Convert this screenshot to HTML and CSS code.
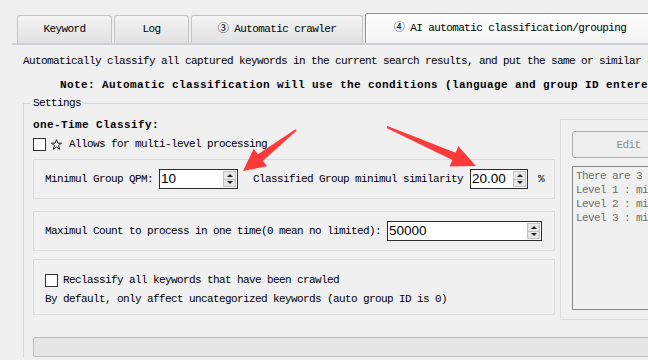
FILE: index.html
```html
<!DOCTYPE html>
<html lang="en">
<head>
  <meta charset="UTF-8">
  <title>AI automatic classification/grouping</title>
  <link rel="stylesheet" href="styles.css">
</head>
<body>
  <div class="tabs">
    <div class="tab tab-keyword">Keyword</div>
    <div class="tab tab-log">Log</div>
    <div class="tab tab-crawler">③ Automatic crawler</div>
    <div class="tab tab-active">④ AI automatic classification/grouping</div>
  </div>

  <p class="intro">Automatically classify all captured keywords in the current search results, and put the same or similar keywords into the same group.</p>
  <p class="note">Note: Automatic classification will use the conditions (language and group ID entered in the search box) of the current search.</p>

  <fieldset class="settings">
    <legend>Settings</legend>
    <div class="settings-row">
      <div class="settings-main">
        <div class="section-title">one-Time Classify:</div>
        <label class="check-row">
          <input type="checkbox">
          <svg class="star" width="11" height="11" viewBox="0 0 11 11"><polygon points="5.5,0.6 6.9,4.2 10.6,4.2 7.6,6.5 8.7,10.3 5.5,8 2.3,10.3 3.4,6.5 0.4,4.2 4.1,4.2" /></svg>
          Allows for multi-level processing
        </label>

        <div class="option-box">
          <span class="field-label">Minimul Group QPM:</span>
          <div class="spin spin-qpm">
            <span class="spin-value">10</span>
            <span class="spin-btns"><span class="spin-up"></span><span class="spin-down"></span></span>
          </div>
          <span class="similarity-label">Classified Group minimul similarity</span>
          <div class="spin spin-similarity">
            <span class="spin-value">20.00</span>
            <span class="spin-btns"><span class="spin-up"></span><span class="spin-down"></span></span>
          </div>
          <span class="unit">%</span>
        </div>

        <div class="option-box option-max">
          <span class="field-label">Maximul Count to process in one time(0 mean no limited):</span>
          <div class="spin spin-count">
            <span class="spin-value">50000</span>
            <span class="spin-btns"><span class="spin-up"></span><span class="spin-down"></span></span>
          </div>
        </div>

        <div class="option-box option-reclassify">
          <label class="check-row"><input type="checkbox">Reclassify all keywords that have been crawled</label>
          <div class="hint">By default, only affect uncategorized keywords (auto group ID is 0)</div>
        </div>
      </div>

      <div class="level-panel">
        <button class="edit-btn">Edit</button>
        <div class="level-text">
          <div>There are 3 levels of classification</div>
          <div>Level 1 : minimul similarity 20%</div>
          <div>Level 2 : minimul similarity 40%</div>
          <div>Level 3 : minimul similarity 60%</div>
        </div>
      </div>
    </div>
    <div class="progress"></div>
  </fieldset>

  <svg class="arrows" width="648" height="360" viewBox="0 0 648 360">
    <polygon points="296.6,130.8 262.9,160.7 267.1,166.2 243,171 253.7,148.8 258.0,154.3 295.4,129.2" />
    <polygon points="386.6,127.9 452.4,160.1 449.6,166.5 476,166 458.4,146.3 455.6,152.7 387.4,126.1" />
  </svg>
</body>
</html>
```

FILE: styles.css
```css
html, body {
  overflow: hidden;
}
body {
  margin: 0;
  width: 648px;
  height: 360px;
  position: relative;
  background: #f0f0f0;
  color: #000;
  font-family: "Liberation Mono", "DejaVu Sans Mono", "Noto Sans CJK SC", monospace;
  font-size: 11px;
  line-height: 16px;
  letter-spacing: -0.6px;
  white-space: nowrap;
}
.tabs {
  display: flex;
  align-items: flex-end;
  gap: 2px;
  height: 43px;
  margin-left: 12px;
  padding-left: 5px;
  border-bottom: 2px solid #cdd1d5;
}
.tab {
  flex-shrink: 0;
  box-sizing: border-box;
  height: 28px;
  line-height: 27px;
  text-align: center;
  border: 1px solid #c3c3c3;
  border-bottom: none;
  border-radius: 3px 3px 0 0;
  background: linear-gradient(#f4f4f4, #e1e1e1);
}
.tab-keyword { width: 95px; }
.tab-log { width: 75px; }
.tab-crawler { width: 172px; }
.tab-active {
  width: 290px;
  height: 30px;
  line-height: 29px;
  border-color: #8e8e8e;
  background: linear-gradient(#fdfdfd, #f3f3f3);
  box-shadow: inset 1px 0 0 #fff;
}
.intro {
  margin: 8px 0 0;
  padding-left: 23px;
}
.note {
  margin: 8px 0 0;
  padding-left: 60px;
  font-weight: bold;
  letter-spacing: 0.4px;
}
.settings {
  margin: 2px 0 0 23px;
  padding: 0 0 0 7px;
  min-width: 0;
  border: 1px solid #d7d7d7;
  border-right: none;
  border-bottom: none;
}
.settings legend {
  padding: 0 2px;
  line-height: 16px;
}
.settings-row {
  display: flex;
  gap: 5px;
  padding: 6px 0 0 2px;
}
.settings-main {
  width: 522px;
  flex-shrink: 0;
}
.section-title {
  font-weight: bold;
  letter-spacing: 0.4px;
}
.check-row {
  display: flex;
  align-items: center;
  height: 14px;
  margin-top: 4px;
}
.check-row input {
  appearance: none;
  width: 13px;
  height: 13px;
  margin: 0 5px 0 0;
  border: 1px solid #333;
  background: #fff;
  box-sizing: border-box;
}
.star {
  margin: 0 7px 0 0;
  flex-shrink: 0;
}
.star polygon {
  fill: none;
  stroke: #111;
  stroke-width: 0.9;
  stroke-linejoin: miter;
}
.option-box {
  margin-top: 8px;
  height: 40px;
  box-sizing: border-box;
  display: flex;
  align-items: center;
  padding: 0 12px 0 11px;
  border: 1px solid #dcdcdc;
}
.field-label {
  margin-right: 6px;
}
.option-max {
  margin-top: 12px;
}
.option-reclassify {
  display: block;
  height: 56px;
  margin-top: 8px;
  padding-top: 12px;
}
.option-reclassify .check-row {
  margin-top: 0;
  height: 16px;
}
.hint {
  margin-top: 3px;
}
.spin {
  display: flex;
  height: 20px;
  box-sizing: border-box;
  border: 1px solid #2b2b2b;
  background: #fff;
  flex-shrink: 0;
}
.spin-qpm { width: 79px; }
.spin-similarity { width: 58px; }
.spin-count { flex: 1; }
.spin-value {
  flex: 1;
  padding-left: 1px;
  font-family: "Liberation Sans", Arial, sans-serif;
  font-size: 13.5px;
  line-height: 18px;
  letter-spacing: 0;
}
.spin-btns {
  display: flex;
  flex-direction: column;
  width: 13px;
  margin: 1px;
  border: 1px solid #c2c2c2;
  box-sizing: border-box;
  background: #e6e6e6;
}
.spin-up, .spin-down {
  flex: 1;
  display: flex;
  align-items: center;
  justify-content: center;
}
.spin-up {
  border-bottom: 1px solid #c2c2c2;
}
.spin-up::before {
  content: "";
  border-left: 3px solid transparent;
  border-right: 3px solid transparent;
  border-bottom: 3px solid #222;
}
.spin-down::before {
  content: "";
  border-left: 3px solid transparent;
  border-right: 3px solid transparent;
  border-top: 3px solid #222;
}
.similarity-label {
  margin: 0 7px 0 15px;
}
.unit {
  margin-left: 10px;
}
.level-panel {
  flex-shrink: 0;
  width: 200px;
  margin-top: 2px;
  padding: 11px 11px 9px;
  border: 1px solid #dcdcdc;
}
.edit-btn {
  display: block;
  width: 113px;
  height: 27px;
  padding: 0;
  border: 1px solid #adadad;
  border-radius: 3px;
  background: #efefef;
  color: #8d8d8d;
  font: inherit;
  letter-spacing: inherit;
}
.level-text {
  margin-top: 8px;
  height: 144px;
  box-sizing: border-box;
  padding: 2px 3px;
  border: 1px solid #868686;
  line-height: 14px;
  color: #6f6f6f;
  overflow: hidden;
}
.progress {
  width: 700px;
  height: 20px;
  margin: 17px 0 0 2px;
  box-sizing: border-box;
  border: 1px solid #bcbcbc;
  border-radius: 2px;
  background: #e6e6e6;
}
.arrows {
  position: absolute;
  left: 0;
  top: 0;
  pointer-events: none;
}
.arrows polygon {
  fill: #fd3a3a;
}
```
